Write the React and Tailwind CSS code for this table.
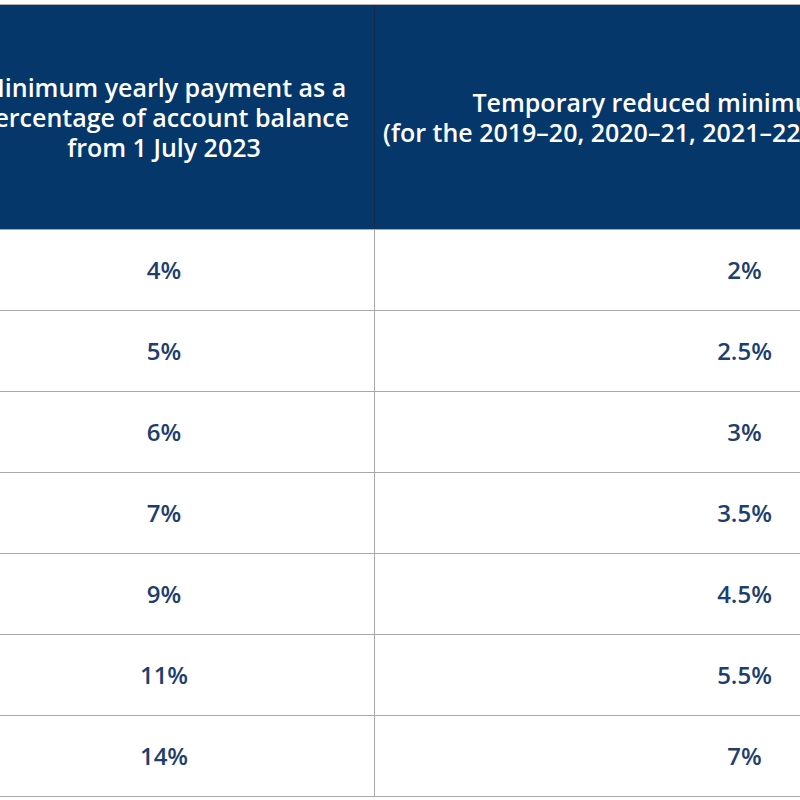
export default function App() {
  const rows = [
    ["4%", "2%"],
    ["5%", "2.5%"],
    ["6%", "3%"],
    ["7%", "3.5%"],
    ["9%", "4.5%"],
    ["11%", "5.5%"],
    ["14%", "7%"],
  ];
  return (
    <div className="w-[800px] h-[800px] overflow-hidden bg-white" style={{ fontFamily: '"Open Sans", sans-serif' }}>
      <div className="ml-[-46px] w-[1160px] pt-[4px]">
        <div className="border-t border-[#b0b0b0]">
          <div className="flex h-[224px] bg-[#05376b] text-white font-semibold text-[25px] leading-[30px]">
            <div className="w-[421px] shrink-0 flex items-center justify-center text-center border-r border-[#1a2a45]">
              <div className="whitespace-nowrap">
                Minimum yearly payment as a<br />percentage of account balance<br />from 1 July 2023
              </div>
            </div>
            <div className="flex-1 min-w-0 flex items-center justify-center text-center">
              <div className="whitespace-nowrap">
                Temporary reduced minimum payment rates<br />(for the 2019–20, 2020–21, 2021–22 and 2022–23 fiscal years)
              </div>
            </div>
          </div>
          {rows.map((r, i) => (
            <div key={i} className="flex h-[81px] border-t border-[#a8a8a8] text-[#1d3e6e] font-semibold text-[24px]">
              <div className="w-[421px] shrink-0 flex items-center justify-center border-r border-[#a8a8a8]">{r[0]}</div>
              <div className="flex-1 min-w-0 flex items-center justify-center">{r[1]}</div>
            </div>
          ))}
          <div className="border-t border-[#a8a8a8]" />
        </div>
      </div>
    </div>
  );
}
